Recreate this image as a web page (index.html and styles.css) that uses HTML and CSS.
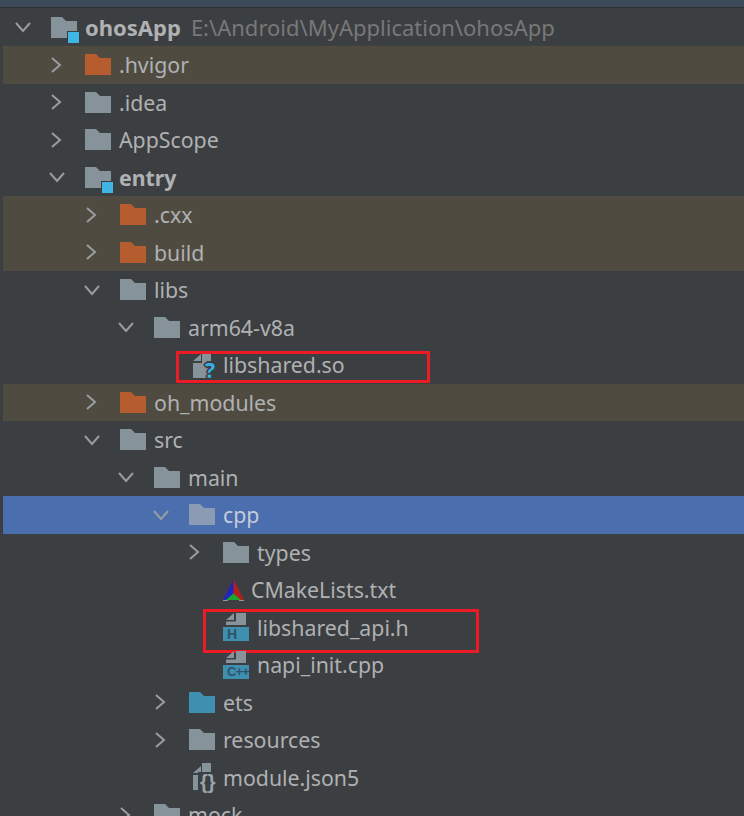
FILE: index.html
```html
<!DOCTYPE html>
<html lang="en">
<head>
<meta charset="utf-8">
<title>Project tree</title>
<link rel="stylesheet" href="styles.css">
</head>
<body>
<svg class="defs" width="0" height="0" aria-hidden="true">
  <defs>
    <symbol id="chev-r" viewBox="0 0 14 18"><path d="M3 2l8 7-8 7" fill="none" stroke="currentColor" stroke-width="2"/></symbol>
    <symbol id="chev-d" viewBox="0 0 18 14"><path d="M2 3l7 8 7-8" fill="none" stroke="currentColor" stroke-width="2"/></symbol>
    <symbol id="folder" viewBox="0 0 26 21"><path d="M0 0h11l4 4h11v17H0z" fill="currentColor"/></symbol>
    <symbol id="page" viewBox="0 0 20 28"><path d="M10 0h9v27H1V12h9zM1 10l8-7v7z" fill="#87939a"/></symbol>
    <symbol id="page-h" viewBox="0 0 26 28"><path d="M3 12V8.500h10V0h10v12zM3 7l8-7v7z" fill="#87939a"/><path d="M0 14h26v14H0z" fill="#3f8fb0"/></symbol>
  </defs>
</svg>
<main class="tree">
  <div class="row l0"><svg class="chev-d"><use href="#chev-d"/></svg><span class="ic wrap"><svg class="folder"><use href="#folder"/></svg><i class="mark"></i></span><b class="name bold">ohosApp</b><span class="path">E:\Android\MyApplication\ohosApp</span></div>
  <div class="row l1 ex"><svg class="chev-r"><use href="#chev-r"/></svg><span class="ic"><svg class="folder orange"><use href="#folder"/></svg></span><span class="name">.hvigor</span></div>
  <div class="row l1"><svg class="chev-r"><use href="#chev-r"/></svg><span class="ic"><svg class="folder"><use href="#folder"/></svg></span><span class="name">.idea</span></div>
  <div class="row l1"><svg class="chev-r"><use href="#chev-r"/></svg><span class="ic"><svg class="folder"><use href="#folder"/></svg></span><span class="name">AppScope</span></div>
  <div class="row l1"><svg class="chev-d"><use href="#chev-d"/></svg><span class="ic wrap"><svg class="folder"><use href="#folder"/></svg><i class="mark"></i></span><b class="name bold-entry">entry</b></div>
  <div class="row l2 ex"><svg class="chev-r"><use href="#chev-r"/></svg><span class="ic"><svg class="folder orange"><use href="#folder"/></svg></span><span class="name">.cxx</span></div>
  <div class="row l2 ex"><svg class="chev-r"><use href="#chev-r"/></svg><span class="ic"><svg class="folder orange"><use href="#folder"/></svg></span><span class="name">build</span></div>
  <div class="row l2"><svg class="chev-d"><use href="#chev-d"/></svg><span class="ic"><svg class="folder"><use href="#folder"/></svg></span><span class="name">libs</span></div>
  <div class="row l3"><svg class="chev-d"><use href="#chev-d"/></svg><span class="ic"><svg class="folder"><use href="#folder"/></svg></span><span class="name">arm64-v8a</span></div>
  <div class="row l4 file"><span class="ic"><svg class="page"><use href="#page"/></svg><b class="badge-q">?</b></span><span class="name">libshared.so</span><i class="callout callout-so"></i></div>
  <div class="row l2 ex"><svg class="chev-r"><use href="#chev-r"/></svg><span class="ic"><svg class="folder orange"><use href="#folder"/></svg></span><span class="name">oh_modules</span></div>
  <div class="row l2"><svg class="chev-d"><use href="#chev-d"/></svg><span class="ic"><svg class="folder"><use href="#folder"/></svg></span><span class="name">src</span></div>
  <div class="row l3"><svg class="chev-d"><use href="#chev-d"/></svg><span class="ic"><svg class="folder"><use href="#folder"/></svg></span><span class="name">main</span></div>
  <div class="row l4 sel"><svg class="chev-d"><use href="#chev-d"/></svg><span class="ic"><svg class="folder"><use href="#folder"/></svg></span><span class="name">cpp</span></div>
  <div class="row l5"><svg class="chev-r"><use href="#chev-r"/></svg><span class="ic"><svg class="folder"><use href="#folder"/></svg></span><span class="name">types</span></div>
  <div class="row l6 cmake"><svg class="tri" viewBox="0 0 21 22"><path d="M10.500 0L0 21l4 0 6.500-6z" fill="#2323bd"/><path d="M10.500 0L21 21l-4 0-6.500-6z" fill="#b01f1f"/><path d="M3 21l7.500-6.500L18 21z" fill="#18a82a"/><path d="M0 21.500h5M16 21.500h5" stroke="#8f9496" stroke-width="1"/></svg><span class="name">CMakeLists.txt</span></div>
  <div class="row l6"><span class="ic"><svg class="page-h"><use href="#page-h"/></svg><b class="tag">H</b></span><span class="name">libshared_api.h</span><i class="callout callout-h"></i></div>
  <div class="row l6"><span class="ic"><svg class="page-h"><use href="#page-h"/></svg><b class="tag tag-cpp">C++</b></span><span class="name">napi_init.cpp</span></div>
  <div class="row l4"><svg class="chev-r"><use href="#chev-r"/></svg><span class="ic"><svg class="folder blue"><use href="#folder"/></svg></span><span class="name">ets</span></div>
  <div class="row l4"><svg class="chev-r"><use href="#chev-r"/></svg><span class="ic"><svg class="folder"><use href="#folder"/></svg></span><span class="name">resources</span></div>
  <div class="row l4 file"><span class="ic"><svg class="page"><use href="#page"/></svg><b class="badge-j">{}</b></span><span class="name">module.json5</span></div>
  <div class="row l3"><svg class="chev-r"><use href="#chev-r"/></svg><span class="ic"><svg class="folder"><use href="#folder"/></svg></span><span class="name">mock</span></div>
</main>
</body>
</html>
```
FILE: styles.css
```css
html, body {
  margin: 0;
  height: 816px;
  overflow: hidden;
  background: #3c3f41;
}
.defs { display: block; height: 0; }
.tree {
  padding: 8.500px 0 0 3px;
  font-family: "Noto Sans", sans-serif;
  font-size: 21.300px;
  color: #afb1b3;
  box-shadow: inset 0 7px 0 #3c4a5a, inset 0 8px 0 #2f3234;
  height: 808px;
}
.row {
  position: relative;
  display: flex;
  align-items: center;
  height: 37.500px;
  white-space: nowrap;
}
.l0 { padding-left: 11px; }
.l1 { padding-left: 45px; }
.l2 { padding-left: 80px; }
.l3 { padding-left: 114px; }
.l4 { padding-left: 149px; }
.l5 { padding-left: 183px; }
.l6 { padding-left: 220px; }
.file.l4 { padding-left: 189px; }
.ex { background: #4f4b41; }
.sel { background: #4b6eaf; color: #c4ccd8; }
.chev-r, .chev-d { flex: none; color: #9a9da0; }
.chev-r { width: 14px; height: 18px; margin: 0 22px 0 1px; }
.chev-d { width: 18px; height: 14px; margin: 0 19px 0 0; }
.ic { position: relative; display: block; flex: none; width: 26px; height: 21px; margin-right: 8px; }
.folder { display: block; width: 26px; height: 21px; color: #87939a; }
.orange { color: #b55d2e; }
.blue { color: #3f8fb0; }
.sel .folder { color: #8a9bb3; }
.mark { position: absolute; left: 17px; top: 15px; width: 11px; height: 11px; background: #3fb5e5; box-shadow: 0 0 0 1px #3c3f41; }
.bold { font-size: 22px; font-weight: 700; }
.bold-entry { font-size: 21.300px; font-weight: 700; }
.path { margin-left: 10px; color: #787878; font-size: 22px; }
.file .ic { width: 26px; height: 28px; margin-right: 5px; }
.page { display: block; width: 20px; height: 28px; }
.badge-q {
  position: absolute;
  left: 13px;
  top: 8px;
  color: #35b1e6;
  font: 700 21px/22px "Noto Sans", sans-serif;
  text-shadow: 2px 0 0 #3c3f41, -2px 0 0 #3c3f41, 0 2px 0 #3c3f41, 0 -2px 0 #3c3f41, -1px -1px 0 #3c3f41, 1px -1px 0 #3c3f41, -1px 1px 0 #3c3f41, 1px 1px 0 #3c3f41;
}
.badge-j {
  position: absolute;
  left: 6px;
  top: 9px;
  padding: 0 2px;
  background: #3c3f41;
  color: #9aa5ab;
  font: 700 20px/20px "Liberation Sans", sans-serif;
}
.tri { flex: none; width: 21px; height: 22px; margin-right: 7px; }
.page-h { display: block; width: 26px; height: 28px; }
.l6 .ic { height: 28px; margin-right: 8px; }
.tag { position: absolute; left: 4px; top: 14px; color: #2c5468; font: 700 14px/14px "Liberation Sans", sans-serif; }
.tag-cpp { font-size: 13px; letter-spacing: -1px; }
.callout { position: absolute; border: 3px solid #ed1c24; box-sizing: border-box; }
.callout-so { left: 173px; top: 5px; width: 254px; height: 32px; }
.callout-h { left: 200px; top: 0.500px; width: 276px; height: 44px; }
```
